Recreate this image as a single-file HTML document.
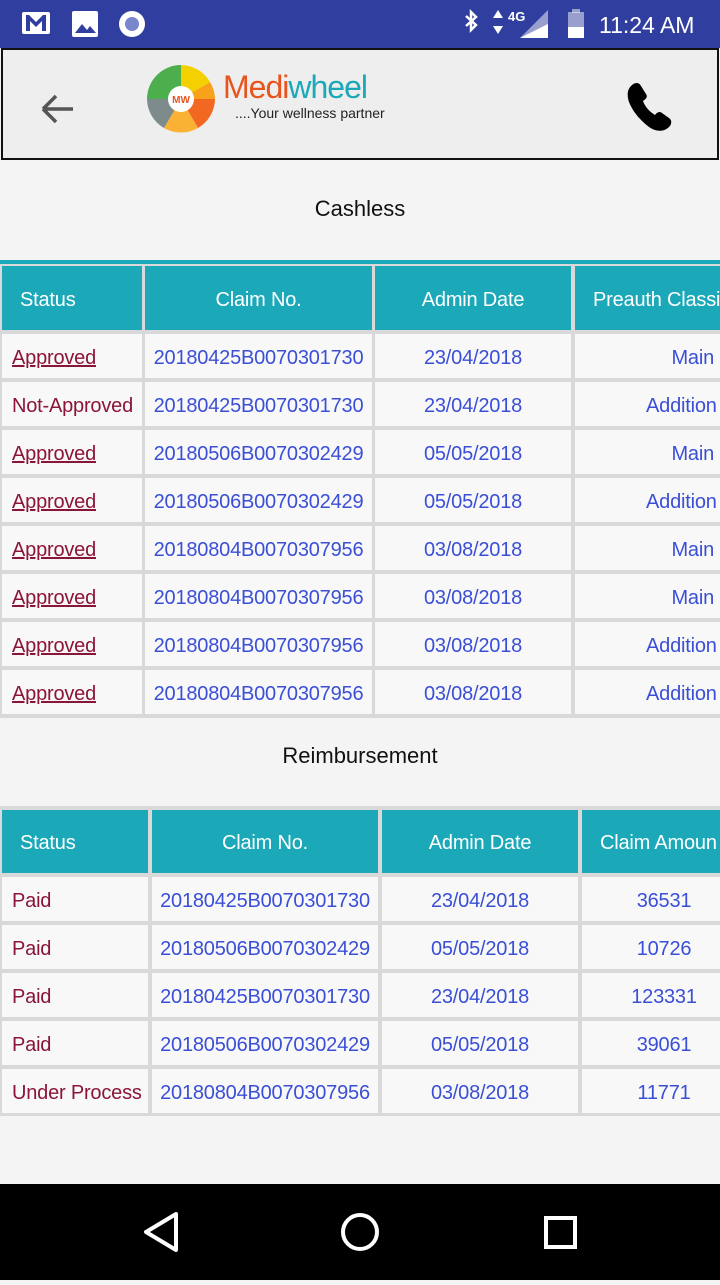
<!DOCTYPE html>
<html><head><meta charset="utf-8"><style>
*{margin:0;padding:0;box-sizing:border-box}
body{width:720px;height:1280px;overflow:hidden;position:relative;background:#f4f4f4;font-family:"Liberation Sans",sans-serif}
.sb{position:absolute;left:0;top:0;width:720px;height:48px;background:#303f9f;color:#fff}
.hdr{position:absolute;left:1px;top:48px;width:718px;height:112px;background:#efeeee;border:2px solid #111}
.c{position:absolute;font-size:20px;letter-spacing:-0.2px;display:flex;align-items:center;white-space:nowrap;overflow:hidden;background:rgba(255,255,255,.8);padding-top:5px}
.h{background:#1ba8b8;color:#fff;padding-top:4px}
.l{padding-left:10px}
.m{justify-content:center}
.r{justify-content:flex-end;padding-right:6px}
.st{color:#8b1538}
.u{text-decoration:underline}
.b{color:#3a4fd6}
.grid{position:absolute;background:#d9d9d9}
.nav{position:absolute;left:0;top:1184px;width:720px;height:96px;background:#000}
</style></head><body>
<div class="sb">
 <svg width="720" height="48" style="position:absolute;left:0;top:0">
  <rect x="22" y="12" width="28" height="22" rx="2" fill="#fff"/><path d="M26 15v16h4V21l6 6 6-6v10h4V15h-3l-7 7-7-7z" fill="#303f9f"/>
  <rect x="72" y="11" width="26" height="26" rx="2" fill="#fff"/><path d="M75 33l7-9 5 6 3-4 6 7z" fill="#303f9f"/>
  <circle cx="132" cy="24" r="13" fill="#fff"/><circle cx="132" cy="24" r="7" fill="#7986cb"/>
  <path d="M466 16l10 9-5 5V12l5 5-10 9" stroke="#fff" stroke-width="2.5" fill="none"/>
  <path d="M498 10l5 8h-10zM498 34l5-8h-10z" fill="#fff"/>
  <text x="508" y="21" font-size="13" font-weight="bold" fill="#fff" font-family="Liberation Sans">4G</text>
  <path d="M520 38L548 10v28z" fill="#fff" opacity=".5"/><path d="M520 38h28v-14z" fill="#fff"/>
  <rect x="568" y="12" width="16" height="26" fill="#fff" opacity=".5"/><rect x="572" y="9" width="8" height="4" fill="#fff" opacity=".5"/><rect x="568" y="27" width="16" height="11" fill="#fff"/>
  <text x="599" y="33" font-size="23" fill="#fff" font-family="Liberation Sans">11:24 AM</text>
 </svg>
</div>
<div class="hdr">
 <svg width="716" height="108" style="position:absolute;left:0;top:0">
  <path d="M40 59h30M40 59l13-13M40 59l13 13" stroke="#555" stroke-width="3.5" fill="none"/>
  <g transform="translate(178,49)">
   <path d="M0 0L0-34A34 34 0 0 1 29-17z" fill="#f5d000"/>
   <path d="M0 0L29-17A34 34 0 0 1 34 0z" fill="#f8a21b"/>
   <path d="M0 0L34 0A34 34 0 0 1 17 29z" fill="#f26722"/>
   <path d="M0 0L17 29A34 34 0 0 1-17 29z" fill="#f9b233"/>
   <path d="M0 0L-17 29A34 34 0 0 1-34 0z" fill="#7d8b8c"/>
   <path d="M0 0L-34 0A34 34 0 0 1 0-34z" fill="#4cae4c"/>
   <circle r="13" fill="#fff"/>
   <text x="0" y="4" font-size="10" font-weight="bold" text-anchor="middle" fill="#e8541e" font-family="Liberation Sans">MW</text>
  </g>
  <text x="220" y="48" font-size="32" fill="#e8541e" font-family="Liberation Sans" letter-spacing="-1">Medi<tspan fill="#1ba8b8">wheel</tspan></text>
  <text x="232" y="68" font-size="14" fill="#222" font-family="Liberation Sans">....Your wellness partner</text>
  <path d="M628 36c4-4 8-4 10 0l5 8c2 3 0 5-3 7 2 6 7 11 12 14 2-3 5-4 7-2l7 5c3 2 3 6 0 9-5 5-13 5-20 0-9-7-16-15-20-25-2-6-2-12 2-16z" fill="#000"/>
 </svg>
</div>
<div style="position:absolute;left:0;top:196px;width:720px;text-align:center;font-size:22px;color:#111">Cashless</div>
<div class="grid" style="left:0;top:260px;width:720px;height:458px;background:#d9d9d9;border-top:4px solid #1ba8b8"></div>
<div class="c h l" style="left:2px;top:266px;width:140px;height:64px;padding-left:18px">Status</div>
<div class="c h m" style="left:145px;top:266px;width:227px;height:64px">Claim No.</div>
<div class="c h m" style="left:375px;top:266px;width:196px;height:64px">Admin Date</div>
<div class="c h l" style="left:575px;top:266px;width:145px;height:64px;padding-left:18px">Preauth Classi</div>

<div class="c l st u" style="left:2px;top:334px;width:140px;height:44px">Approved</div><div class="c m b" style="left:145px;top:334px;width:227px;height:44px">20180425B0070301730</div><div class="c m b" style="left:375px;top:334px;width:196px;height:44px">23/04/2018</div><div class="c r b" style="left:575px;top:334px;width:145px;height:44px">Main</div>
<div class="c l st" style="left:2px;top:382px;width:140px;height:44px">Not-Approved</div><div class="c m b" style="left:145px;top:382px;width:227px;height:44px">20180425B0070301730</div><div class="c m b" style="left:375px;top:382px;width:196px;height:44px">23/04/2018</div><div class="c b" style="left:575px;top:382px;width:145px;height:44px;padding-left:71px">Addition</div>
<div class="c l st u" style="left:2px;top:430px;width:140px;height:44px">Approved</div><div class="c m b" style="left:145px;top:430px;width:227px;height:44px">20180506B0070302429</div><div class="c m b" style="left:375px;top:430px;width:196px;height:44px">05/05/2018</div><div class="c r b" style="left:575px;top:430px;width:145px;height:44px">Main</div>
<div class="c l st u" style="left:2px;top:478px;width:140px;height:44px">Approved</div><div class="c m b" style="left:145px;top:478px;width:227px;height:44px">20180506B0070302429</div><div class="c m b" style="left:375px;top:478px;width:196px;height:44px">05/05/2018</div><div class="c b" style="left:575px;top:478px;width:145px;height:44px;padding-left:71px">Addition</div>
<div class="c l st u" style="left:2px;top:526px;width:140px;height:44px">Approved</div><div class="c m b" style="left:145px;top:526px;width:227px;height:44px">20180804B0070307956</div><div class="c m b" style="left:375px;top:526px;width:196px;height:44px">03/08/2018</div><div class="c r b" style="left:575px;top:526px;width:145px;height:44px">Main</div>
<div class="c l st u" style="left:2px;top:574px;width:140px;height:44px">Approved</div><div class="c m b" style="left:145px;top:574px;width:227px;height:44px">20180804B0070307956</div><div class="c m b" style="left:375px;top:574px;width:196px;height:44px">03/08/2018</div><div class="c r b" style="left:575px;top:574px;width:145px;height:44px">Main</div>
<div class="c l st u" style="left:2px;top:622px;width:140px;height:44px">Approved</div><div class="c m b" style="left:145px;top:622px;width:227px;height:44px">20180804B0070307956</div><div class="c m b" style="left:375px;top:622px;width:196px;height:44px">03/08/2018</div><div class="c b" style="left:575px;top:622px;width:145px;height:44px;padding-left:71px">Addition</div>
<div class="c l st u" style="left:2px;top:670px;width:140px;height:44px">Approved</div><div class="c m b" style="left:145px;top:670px;width:227px;height:44px">20180804B0070307956</div><div class="c m b" style="left:375px;top:670px;width:196px;height:44px">03/08/2018</div><div class="c b" style="left:575px;top:670px;width:145px;height:44px;padding-left:71px">Addition</div>

<div style="position:absolute;left:0;top:743px;width:720px;text-align:center;font-size:22px;color:#111">Reimbursement</div>
<div class="grid" style="left:0;top:806px;width:720px;height:310px"></div>
<div class="c h l" style="left:2px;top:810px;width:146px;height:63px;padding-left:18px">Status</div>
<div class="c h m" style="left:152px;top:810px;width:226px;height:63px">Claim No.</div>
<div class="c h m" style="left:382px;top:810px;width:196px;height:63px">Admin Date</div>
<div class="c h l" style="left:582px;top:810px;width:138px;height:63px;padding-left:18px">Claim Amoun</div>

<div class="c l st" style="left:2px;top:877px;width:146px;height:44px">Paid</div><div class="c m b" style="left:152px;top:877px;width:226px;height:44px">20180425B0070301730</div><div class="c m b" style="left:382px;top:877px;width:196px;height:44px">23/04/2018</div><div class="c m b" style="left:582px;top:877px;width:164px;height:44px">36531</div>
<div class="c l st" style="left:2px;top:925px;width:146px;height:44px">Paid</div><div class="c m b" style="left:152px;top:925px;width:226px;height:44px">20180506B0070302429</div><div class="c m b" style="left:382px;top:925px;width:196px;height:44px">05/05/2018</div><div class="c m b" style="left:582px;top:925px;width:164px;height:44px">10726</div>
<div class="c l st" style="left:2px;top:973px;width:146px;height:44px">Paid</div><div class="c m b" style="left:152px;top:973px;width:226px;height:44px">20180425B0070301730</div><div class="c m b" style="left:382px;top:973px;width:196px;height:44px">23/04/2018</div><div class="c m b" style="left:582px;top:973px;width:164px;height:44px">123331</div>
<div class="c l st" style="left:2px;top:1021px;width:146px;height:44px">Paid</div><div class="c m b" style="left:152px;top:1021px;width:226px;height:44px">20180506B0070302429</div><div class="c m b" style="left:382px;top:1021px;width:196px;height:44px">05/05/2018</div><div class="c m b" style="left:582px;top:1021px;width:164px;height:44px">39061</div>
<div class="c l st" style="left:2px;top:1069px;width:146px;height:44px">Under Process</div><div class="c m b" style="left:152px;top:1069px;width:226px;height:44px">20180804B0070307956</div><div class="c m b" style="left:382px;top:1069px;width:196px;height:44px">03/08/2018</div><div class="c m b" style="left:582px;top:1069px;width:164px;height:44px">11771</div>

<div class="nav">
 <svg width="720" height="96">
  <path d="M176 30L146 48L176 66z" stroke="#fff" stroke-width="4" fill="none" stroke-linejoin="round"/>
  <circle cx="360" cy="48" r="17" stroke="#fff" stroke-width="4" fill="none"/>
  <rect x="546" y="34" width="29" height="29" stroke="#fff" stroke-width="4" fill="none"/>
 </svg>
</div>
</body></html>
